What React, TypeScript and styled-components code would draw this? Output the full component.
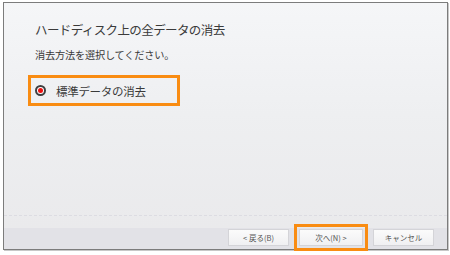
import React from 'react';
import styled, {createGlobalStyle} from "styled-components";

const GlobalStyle = createGlobalStyle`
  html, body {
    margin: 0;
    padding: 0;
    background: #ffffff;
  }
  body {
    font-family: "Noto Sans CJK JP", "Noto Sans", sans-serif;
  }
`

const buttons = [
    {label: "< 戻る(B)", focused: false},
    {label: "次へ(N) >", focused: true},
    {label: "キャンセル", focused: false},
]

const App = () => {
    return (
        <Page>
            <GlobalStyle/>
            <Window>
                <Content>
                    <Title>ハードディスク上の全データの消去</Title>
                    <Subtitle>消去方法を選択してください。</Subtitle>
                    <Highlight>
                        <RadioRow>
                            <Radio/>
                            <RadioLabel>標準データの消去</RadioLabel>
                        </RadioRow>
                    </Highlight>
                </Content>
                <Footer>
                    {buttons.map((b, index) => (
                        <Button key={index} $focused={b.focused}>{b.label}</Button>
                    ))}
                </Footer>
            </Window>
        </Page>
    );
};

export default App;

const Page = styled.div`
  width: 450px;
  height: 255px;
  padding: 2px 0 0 3px;
  box-sizing: border-box;
  background: #ffffff;
`

const Window = styled.div`
  width: 445px;
  height: 248px;
  box-sizing: border-box;
  border: 1px solid #7c7c7c;
  box-shadow: 1px 1px 0 #c8c8c8;
  display: flex;
  flex-direction: column;
  background: linear-gradient(180deg, #f5f6f8 0%, #eeeff1 45%, #e9e9eb 100%);
`

const Content = styled.div`
  flex: 1;
  padding: 18px 0 0 31px;
  display: flex;
  flex-direction: column;
  border-bottom: 1px dashed #dcdce2;
  margin-bottom: 12px;
`

const Title = styled.div`
  font-size: 12.5px;
  line-height: 18px;
  color: #3a3a3a;
  letter-spacing: -0.6px;
`

const Subtitle = styled.div`
  margin-top: 8px;
  font-size: 10.2px;
  line-height: 16px;
  color: #3a3a3a;
  letter-spacing: -0.2px;
`

const Highlight = styled.div`
  margin: 12px 0 0 -7px;
  width: 152px;
  height: 31px;
  box-sizing: border-box;
  border: 3px solid #f98c12;
  display: flex;
  align-items: center;
`

const RadioRow = styled.label`
  display: flex;
  align-items: center;
  gap: 10px;
  padding-left: 4px;
`

const Radio = styled.span`
  width: 11px;
  height: 11px;
  box-sizing: border-box;
  border-radius: 50%;
  border: 2px solid #3f3f3f;
  background: #ffffff;
  display: flex;
  align-items: center;
  justify-content: center;

  &::after {
    content: "";
    width: 5px;
    height: 5px;
    border-radius: 50%;
    background: #ee1010;
  }
`

const RadioLabel = styled.span`
  font-size: 11.5px;
  line-height: 16px;
  color: #3a3a3a;
  letter-spacing: -0.3px;
`

const Footer = styled.div`
  height: 21px;
  background: #e2e2e7;
  display: flex;
  justify-content: flex-end;
  gap: 10px;
  padding: 1px 13px 0 0;
  box-sizing: border-box;
`

const Button = styled.div<{ $focused: boolean }>`
  width: ${p => p.$focused ? 64 : 61}px;
  height: 17px;
  box-sizing: border-box;
  border: 1px solid #d4d4d8;
  background: linear-gradient(180deg, #fbfbfb 0%, #f0f0f2 100%);
  display: flex;
  align-items: center;
  justify-content: center;
  font-size: 7.5px;
  color: #555555;
  outline: ${p => p.$focused ? "3px solid #f98c12" : "none"};
  outline-offset: 2px;
`
